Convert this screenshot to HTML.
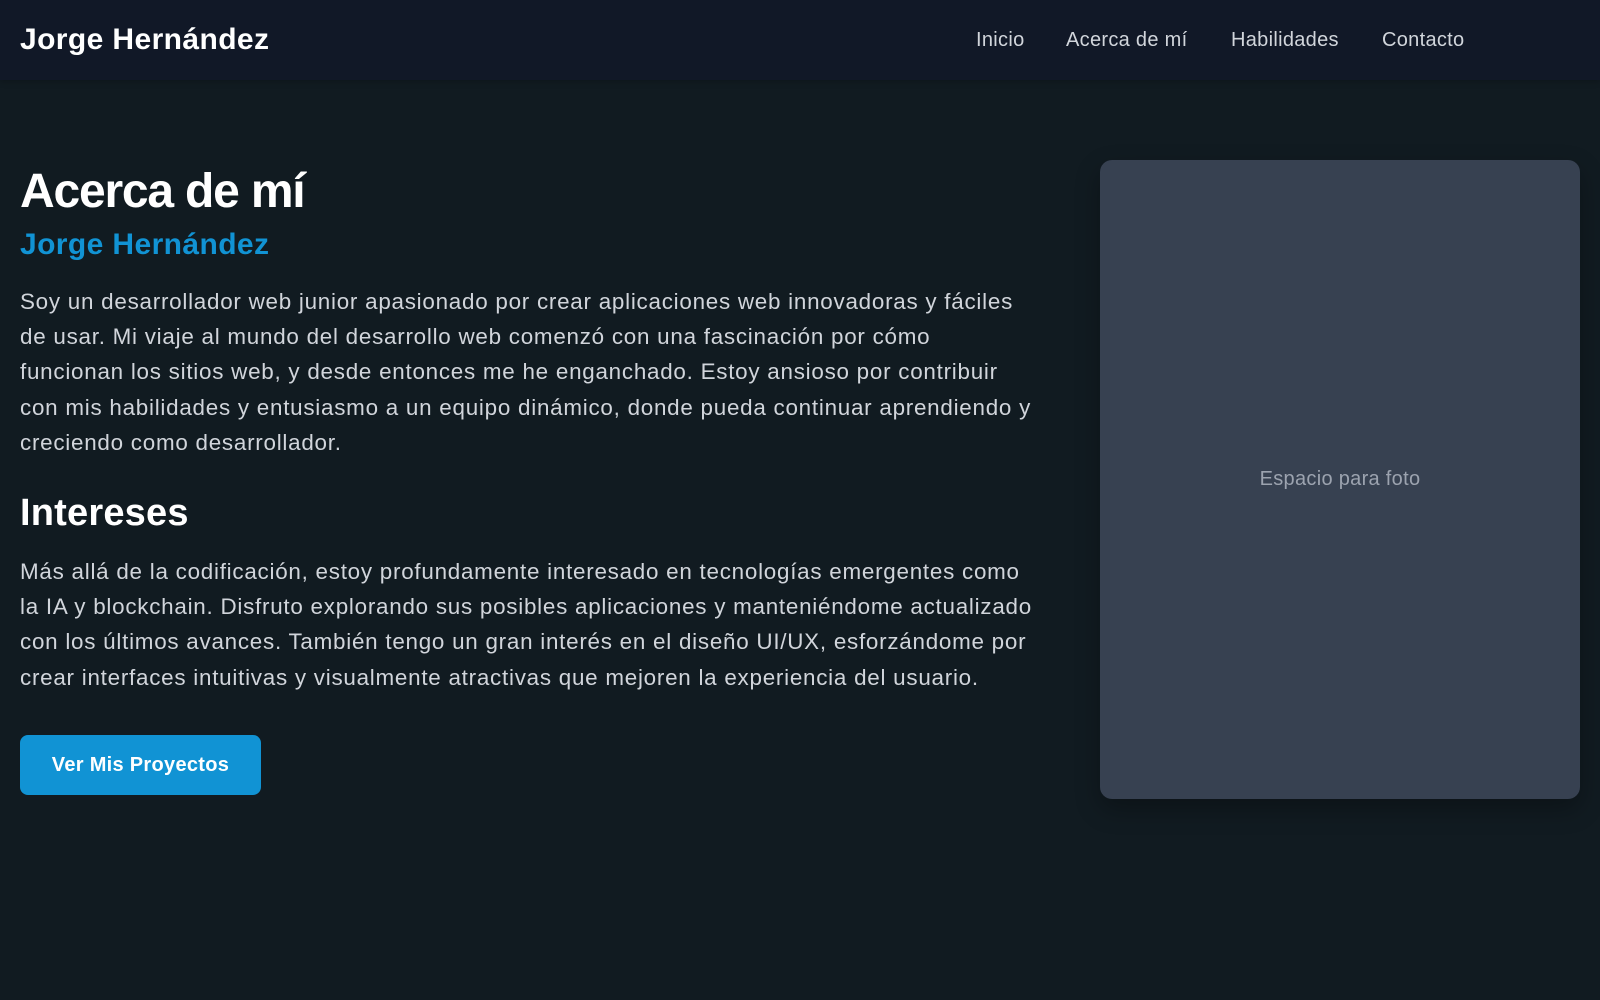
<!DOCTYPE html>
<html><head><meta charset="utf-8"><style>
*{margin:0;padding:0;box-sizing:border-box}
body{width:1600px;height:1000px;background:#111b21;font-family:"Liberation Sans",sans-serif;position:relative;overflow:hidden}
.hdr{position:absolute;left:0;top:0;width:1600px;height:80px;background:#111827;box-shadow:0 2px 6px rgba(0,0,0,.2)}
.logo{position:absolute;left:20px;top:22px;font-size:30px;font-weight:bold;color:#fff;line-height:36px;letter-spacing:0.4px}
.nav{position:absolute;top:28px;font-size:20px;color:#d1d5db;line-height:24px;white-space:nowrap;letter-spacing:0.3px}
h1{position:absolute;left:20px;top:164px;font-size:48px;line-height:56px;color:#fff;letter-spacing:-1.2px}
.sub{position:absolute;left:20px;top:227px;font-size:30px;line-height:36px;color:#1193d4;font-weight:bold;letter-spacing:0.4px}
p{position:absolute;left:20px;font-size:22.4px;line-height:35.2px;color:#d1d5db;white-space:nowrap;letter-spacing:0.75px}
h2{position:absolute;left:20px;top:491px;font-size:38px;line-height:44px;color:#fff;letter-spacing:0.2px}
.btn{position:absolute;left:20px;top:735px;width:241px;height:60px;background:#1193d4;border-radius:8px;color:#fff;font-weight:bold;font-size:20px;line-height:60px;text-align:center;letter-spacing:0.3px}
.photo{position:absolute;left:1100px;top:160px;width:480px;height:639px;background:#374151;border-radius:12px;box-shadow:0 10px 25px rgba(0,0,0,.3);color:#9ca3af;font-size:20px;display:flex;align-items:center;justify-content:center;letter-spacing:0.3px}
</style></head><body>
<div class="hdr">
<div class="logo">Jorge Hernández</div>
<div class="nav" style="left:976px">Inicio</div>
<div class="nav" style="left:1066px">Acerca de mí</div>
<div class="nav" style="left:1231px">Habilidades</div>
<div class="nav" style="left:1382px">Contacto</div>
</div>
<h1>Acerca de mí</h1>
<div class="sub">Jorge Hernández</div>
<p style="top:284px">Soy un desarrollador web junior apasionado por crear aplicaciones web innovadoras y fáciles<br>de usar. Mi viaje al mundo del desarrollo web comenzó con una fascinación por cómo<br>funcionan los sitios web, y desde entonces me he enganchado. Estoy ansioso por contribuir<br>con mis habilidades y entusiasmo a un equipo dinámico, donde pueda continuar aprendiendo y<br>creciendo como desarrollador.</p>
<h2>Intereses</h2>
<p style="top:554px">Más allá de la codificación, estoy profundamente interesado en tecnologías emergentes como<br>la IA y blockchain. Disfruto explorando sus posibles aplicaciones y manteniéndome actualizado<br>con los últimos avances. También tengo un gran interés en el diseño UI/UX, esforzándome por<br>crear interfaces intuitivas y visualmente atractivas que mejoren la experiencia del usuario.</p>
<div class="btn">Ver Mis Proyectos</div>
<div class="photo">Espacio para foto</div>
</body></html>
